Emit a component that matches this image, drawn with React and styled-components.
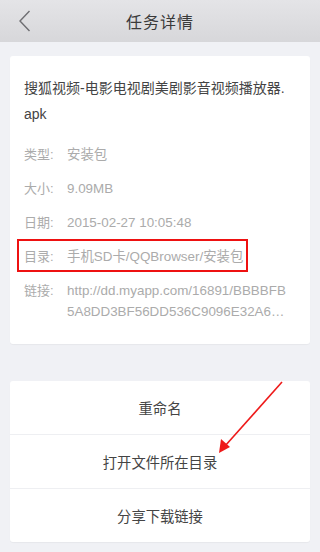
import React from 'react';
import styled, { createGlobalStyle } from 'styled-components';

const GlobalStyle = createGlobalStyle`
  html, body {
    margin: 0;
    padding: 0;
    background: #f0f1f5;
    font-family: "Liberation Sans", "Noto Sans CJK SC", sans-serif;
  }
`;

const Page = styled.div`
  width: 320px;
  height: 552px;
  background: #f0f1f5;
  position: relative;
  overflow: hidden;
`;

const Header = styled.header`
  height: 42px;
  background: linear-gradient(#e4e4e7, #d7d7da);
  display: flex;
  align-items: center;
  justify-content: center;
  position: relative;
`;

const BackButton = styled.div`
  position: absolute;
  left: 18px;
  top: 10px;
  width: 14px;
  height: 22px;
  display: flex;
`;

const Title = styled.h1`
  margin: 0;
  font-size: 16px;
  font-weight: 400;
  color: #3a3a3a;
  letter-spacing: 1px;
`;

const Card = styled.section`
  margin: ${p => p.$top}px 10px 0;
  background: #fff;
  border-radius: 3px;
  box-shadow: 0 1px 1px rgba(0, 0, 0, 0.04);
`;

const InfoCard = styled(Card)`
  height: 288px;
  padding: 19px 10px 0 14px;
  box-sizing: border-box;
  display: flex;
  flex-direction: column;
`;

const FileName = styled.div`
  font-size: 14px;
  line-height: 26px;
  color: #444;
  margin-bottom: 11px;
`;

const Row = styled.div`
  display: flex;
  font-size: 13px;
  line-height: 21px;
  color: #ababab;
  padding: 6px 0 7px;
  position: relative;
`;

const Label = styled.span`
  width: 43px;
  flex: none;
`;

const Value = styled.span`
  flex: 1;
  padding-right: 12px;
  font-size: 13.4px;
  word-break: break-all;
  display: -webkit-box;
  -webkit-line-clamp: 2;
  -webkit-box-orient: vertical;
  overflow: hidden;
`;

const Highlight = styled.div`
  position: absolute;
  left: -7px;
  top: -1px;
  width: 231px;
  height: 33px;
  border: 2px solid #ee1111;
  box-sizing: border-box;
`;

const ActionCard = styled(Card)`
  display: flex;
  flex-direction: column;
`;

const Action = styled.div`
  height: 53px;
  display: flex;
  align-items: center;
  justify-content: center;
  font-size: 14.3px;
  color: #444;
  & + & {
    border-top: 1px solid #eeeff2;
  }
`;

const Arrow = styled.svg`
  position: absolute;
  left: 0;
  top: 0;
  pointer-events: none;
`;

const info = [
  ['类型:', '安装包'],
  ['大小:', '9.09MB'],
  ['日期:', '2015-02-27 10:05:48'],
  ['目录:', '手机SD卡/QQBrowser/安装包', true],
  ['链接:', 'http://dd.myapp.com/16891/BBBBFB5A8DD3BF56DD536C9096E32A6F1D2E6A.apk'],
];

const actions = ['重命名', '打开文件所在目录', '分享下载链接'];

export default function App() {
  return (
    <Page>
      <GlobalStyle />
      <Header>
        <BackButton>
          <svg width="14" height="22" viewBox="0 0 14 22">
            <path d="M11.5 1 L2 11 L11.5 21" fill="none" stroke="#6e6e72" strokeWidth="1.4" />
          </svg>
        </BackButton>
        <Title>任务详情</Title>
      </Header>

      <InfoCard $top={14}>
        <FileName>
          搜狐视频-电影电视剧美剧影音视频播放器.<wbr />apk
        </FileName>
        {info.map(([label, value, marked]) => (
          <Row key={label}>
            {marked && <Highlight />}
            <Label>{label}</Label>
            <Value>{value}</Value>
          </Row>
        ))}
      </InfoCard>

      <ActionCard $top={37}>
        {actions.map(a => (
          <Action key={a}>{a}</Action>
        ))}
      </ActionCard>

      <Arrow width="320" height="552" viewBox="0 0 320 552">
        <line x1="282" y1="382" x2="225" y2="446" stroke="#ee1a1a" strokeWidth="1.6" />
        <polygon points="219,453 221,439 230,447" fill="#ee1a1a" />
      </Arrow>
    </Page>
  );
}
